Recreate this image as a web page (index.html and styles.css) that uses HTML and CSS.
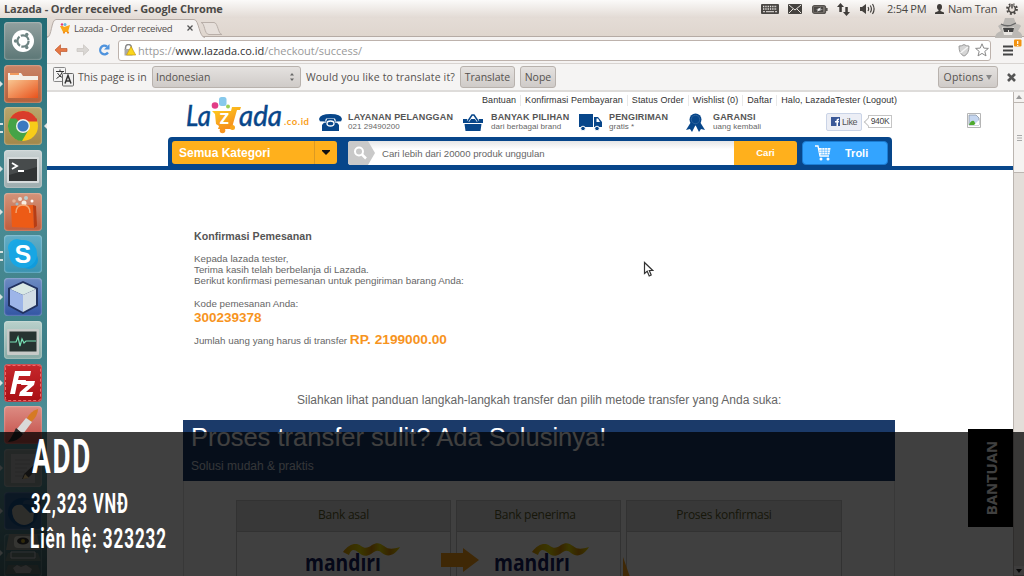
FILE: index.html
```html
<!DOCTYPE html>
<html lang="id">
<head>
<meta charset="utf-8">
<title>Lazada - Order received</title>
<link rel="stylesheet" href="styles.css">
</head>
<body>
<div class="screen">
<header class="panel">
  <span class="panel-title">Lazada - Order received - Google Chrome</span>
  <svg class="ind-kbd" width="18" height="10" viewBox="0 0 18 10"><rect width="18" height="10" rx="1" fill="#4a4744"/><path d="M2 2.5h14M2 5h14" stroke="#e8e4e0" stroke-width="1.3" stroke-dasharray="1.3 1"/><path d="M2 7.7h2M5 7.7h8M14 7.7h2" stroke="#e8e4e0"/></svg>
  <svg class="ind-mail" width="14" height="10" viewBox="0 0 14 10"><rect width="14" height="10" rx="1" fill="#45423f"/><path d="M1 1l6 5 6-5M1 9l4-4M13 9L9 5" stroke="#e9e4df" fill="none"/></svg>
  <svg class="ind-bat" width="16" height="9" viewBox="0 0 16 9"><rect x=".6" y=".6" width="13" height="7.8" rx="2" fill="#77726d" stroke="#55514d" stroke-width="1.2"/><path d="M14 3h1.6v3H14z" fill="#55514d"/><rect x="2" y="2" width="9" height="5" fill="#4a4744"/><path d="M4 4.5l5-2-1 2 3 0-6 2 1-2z" fill="#eee"/></svg>
  <svg class="ind-net" width="13" height="13" viewBox="0 0 13 13"><path d="M3.5 0L0 4h2.3v5h2.5V4H7zM9.5 13L6 9h2.3V4h2.5v5H13z" fill="#3f3c39"/></svg>
  <svg class="ind-vol" width="16" height="12" viewBox="0 0 16 12"><path d="M0 4h2l4-3v10L2 8H0z" fill="#45423f"/><path d="M8 4q1.3 2 0 4M10.3 2.5q2.2 3.5 0 7M12.5 1q3.2 5 0 10" stroke="#45423f" stroke-width="1.2" fill="none"/></svg>
  <span class="clock">2:54 PM</span>
  <svg class="ind-user" width="9" height="11" viewBox="0 0 9 11"><ellipse cx="4.5" cy="3" rx="2.5" ry="3" fill="#3f3c39"/><path d="M3.5 5h2v2L9 8.4V10H0V8.4L3.500 7z" fill="#3f3c39"/></svg>
  <span class="user">Nam Tran</span>
  <svg class="ind-gear" width="12" height="12" viewBox="0 0 12 12"><circle cx="6" cy="6" r="4.900" fill="none" stroke="#4a4744" stroke-width="2" stroke-dasharray="1.9 1.950"/><circle cx="6" cy="6" r="3.400" fill="#e7e0da" stroke="#4a4744" stroke-width="1.500"/><path d="M4.600 0h2.800v5.500H4.600z" fill="#eee8e3"/><path d="M6 1v4.500" stroke="#4a4744" stroke-width="1.500"/></svg>
</header>
<div class="desktop">
<nav class="launcher">
  <div class="tile dash"><svg viewBox="0 0 38 38"><circle cx="19" cy="19" r="11" fill="#fff"/><circle cx="19" cy="19" r="5.600" fill="none" stroke="#6e8483" stroke-width="2.200" stroke-dasharray="10.300 1.400"/><circle cx="11.500" cy="19" r="1.700" fill="#6e8483"/><circle cx="22.800" cy="12.500" r="1.700" fill="#6e8483"/><circle cx="22.800" cy="25.500" r="1.700" fill="#6e8483"/></svg></div>
  <div class="tile files run"><svg viewBox="0 0 38 38"><path d="M4 8h13l2 3h15v8H4z" fill="#f4eee6"/><path d="M6 9h9" stroke="#f19a5c" stroke-width="2"/><path d="M4 15h30v18H4z" fill="url(#go)"/><defs><linearGradient id="go" x2="1" y2="1"><stop stop-color="#f8c691"/><stop offset="1" stop-color="#e9521c"/></linearGradient></defs></svg></div>
  <div class="tile chrome run two active"><svg viewBox="0 0 38 38"><circle cx="19" cy="19" r="15" fill="#f7cc19"/><path d="M19 19L6 11.500A15 15 0 0 1 33 13.500H19z" fill="#d93c2c"/><path d="M19 19l-7-7.500-6 0A15 15 0 0 0 18 34l7-12z" fill="#45a347"/><path d="M19 13h14" stroke="#d93c2c" stroke-width="3"/><circle cx="19" cy="19" r="7" fill="#f1f3ed"/><circle cx="19" cy="19" r="5.600" fill="#3b79c0"/></svg></div>
  <div class="tile term run"><svg viewBox="0 0 38 38"><rect x="3" y="7" width="32" height="26" rx="1" fill="#d5dadb"/><rect x="5" y="9" width="28" height="22" fill="#303334"/><path d="M5 9h28v8L5 25z" fill="#474b4c"/><path d="M8 13l5 3-5 3M14 21h6" stroke="#fff" stroke-width="1.800" fill="none"/></svg></div>
  <div class="tile soft run"><svg viewBox="0 0 38 38"><path d="M7 13l22-1 1 23-22-1z" fill="#ed5b16"/><path d="M29 12l3 1 1 20-3 2z" fill="#b63d15"/><circle cx="10" cy="8" r="1.800" fill="#e6b094"/><circle cx="16" cy="6" r="2" fill="#ebe2d8"/><circle cx="22" cy="5" r="2" fill="#b8ced0"/><circle cx="28" cy="8" r="1.500" fill="#fff"/><circle cx="20" cy="10" r="2.500" fill="#f7eee2"/><circle cx="13" cy="11" r="1.500" fill="#9fb9c4"/><path d="M12 20q0-8 7-8t7 8" fill="none" stroke="#f4a570" stroke-width="1.500"/></svg></div>
  <div class="tile skype run two"><svg viewBox="0 0 38 38"><circle cx="13" cy="13" r="9" fill="#19a9e5"/><circle cx="25" cy="25" r="9" fill="#109bdc"/><circle cx="19" cy="19" r="14" fill="#18a6e4"/><text x="10.500" y="28" class="s-letter">S</text></svg></div>
  <div class="tile cube run"><svg viewBox="0 0 38 38"><path d="M19 3l15 7v18L19 36 4 28V10z" fill="#20315e"/><path d="M19 5l13 6-13 6L6 11z" fill="#d8e8e5"/><path d="M6 11l13 6v17L6 27z" fill="#9db5e8"/><path d="M32 11l-13 6v17l13-7z" fill="#d1dce5"/></svg></div>
  <div class="tile monitor"><svg viewBox="0 0 38 38"><rect x="3" y="8" width="32" height="26" rx="1" fill="#c7cac8"/><rect x="5.500" y="10.500" width="27" height="20" fill="#263331"/><path d="M6 21h6l2-5 2 9 2-7 2 4 2-2h10" stroke="#78e0b5" stroke-width="1.200" fill="none"/></svg></div>
  <div class="tile fz run"><svg viewBox="0 0 38 38"><rect x="1.500" y="1.500" width="35" height="35" rx="2" fill="none" stroke="#e96b6b" stroke-dasharray="3 2"/><path d="M11 7h16l-1 5H15l-1 4h8l-1 4h-8l-2 10H6z M18 17h13l-1 4-8 7h7l-1 4H15l1-4 8-7h-7z" fill="#fff"/></svg></div>
  <div class="tile paint"><svg viewBox="0 0 38 38"><path d="M34 3q-7 2-11 9l4 4q7-6 7-13z" fill="#d67a24"/><path d="M22 12l6 4-9 12-6-5z" fill="#d9d9d9"/><path d="M12 22l7 6q-4 7-15 8 4-5 8-14z" fill="#292929"/></svg></div>
  <div class="tile edit run"><svg viewBox="0 0 38 38"><rect x="7" y="5" width="24" height="29" fill="#b5b5b3"/><path d="M11 11h15M11 15h15M11 19h12M11 23h10M11 27h8" stroke="#999"/><path d="M33 13l3 4-12 12-6 1 2-5z" fill="#444"/><path d="M21 25l4 4-6 1z" fill="#e8c98a"/></svg></div>
  <div class="tile bird run"><svg viewBox="0 0 38 38"><path d="M4 23C3 8 17 2 29 8q-11-1-10 4 13-1 15 9-1 12-13 14Q8 35 4 23z" fill="#174f88"/><path d="M8 18q2-6 10-5l8 8 4-1-1 9q-8 7-15 2-6-4-6-13z" fill="#b5b2a8"/></svg></div>
  <div class="tile stack run"><svg viewBox="0 0 38 43"><path d="M5 0h28l3 16H2z" fill="#8f958b"/><rect x="10" y="2" width="18" height="12" rx="4" fill="#d4d1c6"/><ellipse cx="19" cy="7" rx="6" ry="3.500" fill="#333"/><circle cx="19" cy="7" r="2" fill="#bfa32e"/><path d="M4 19h30l3 8H1z" fill="#6c7f79"/><path d="M7 18h24v6H7z" fill="none" stroke="#ccc"/><path d="M4 31h30l3 9H1z" fill="#5f706b"/><path d="M9 34l4-3 4 2 5-2 6 4-2 4H12z" fill="#a5a5a5"/></svg></div>
</nav>
<main class="window">
  <div class="tabs">
    <svg class="tab-shape" width="185" height="20" viewBox="0 0 185 20"><path d="M0 19.500C5 19 4 1.500 9 1.500H147C152 1.500 152 19.500 158 19.500" fill="#f5f3f2" stroke="#b5aba5"/><path d="M154 4.500h13c4 0 4 12 8 12h-13c-5 0-4-12-8-12z" fill="#e6dfda" stroke="#b9afa9"/></svg>
    <svg class="favicon" width="11" height="11" viewBox="0 0 11 11"><path d="M0 3h3l1 1 6-2-2 7H3z" fill="#f9a61a"/><circle cx="2" cy="1.500" r="1.200" fill="#e43a79"/><circle cx="5" cy="1.500" r="1.500" fill="#6bb8dd"/><circle cx="4" cy="9.600" r="1.100" fill="#f08b1d"/><circle cx="8" cy="9.600" r="1.100" fill="#f08b1d"/></svg>
    <span class="tab-title">Lazada - Order received</span>
    <svg class="tab-close" width="6" height="6" viewBox="0 0 6 6"><path d="M.5.5l5 5M5.500.5l-5 5" stroke="#555" stroke-width="1.300"/></svg>
    <svg class="spy" width="28" height="20" viewBox="0 0 28 20"><path d="M1 20q0-5 6-7l-3-5q2-2 5-2l2-6h9l2 6q4 0 5 2l-3 5q5 2 4 7z" fill="#bbb8b4"/><path d="M8 9q6 3 12 0l-2 8h-8z" fill="#e8e5e1"/><path d="M7 6q7 4 15-1" stroke="#666" fill="none" stroke-width="1.300"/><path d="M9 10h11l-1 4h-4v-2h-1v2h-4z" fill="#444"/></svg>
  </div>
  <div class="toolbar">
    <svg class="t-back" width="14" height="12" viewBox="0 0 14 12"><path d="M6.500.8L1 6l5.500 5.200V7.500H13V4.500H6.500z" fill="#e57745" stroke="#bf5c30" stroke-width=".7"/></svg>
    <svg class="t-fwd" width="14" height="12" viewBox="0 0 14 12"><path d="M7.500.8L13 6l-5.500 5.200V7.500H1V4.500h6.500z" fill="#d9d6d3" stroke="#c7c3bf" stroke-width=".7"/></svg>
    <svg class="t-reload" width="12" height="12" viewBox="0 0 12 12"><path d="M9 2.500A4.300 4.300 0 1 0 10 8.500" fill="none" stroke="#4f93dd" stroke-width="2.300"/><path d="M11.500 0v5.500H6z" fill="#4f93dd"/></svg>
    <div class="omnibox">
      <svg width="12" height="12" viewBox="0 0 12 12"><path d="M1.500 6V4q0-3.500 3-3.500T7.500 4v2" fill="none" stroke="#888" stroke-width="1.500"/><rect x=".5" y="5" width="8" height="6.500" fill="#aaa"/><path d="M7 2.500l4.700 8.500H2.500z" fill="#fbd51b" stroke="#c49b12" stroke-width=".7"/></svg>
      <span class="url">https://<b>www.lazada.co.id</b>/checkout/success/</span>
      <svg width="12" height="13" viewBox="0 0 12 13"><path d="M6 .6q2.500 1.500 5 1.500 0 8-5 10-5-2-5-10 2.500 0 5-1.500z" fill="#d5d5d5" stroke="#999"/><path d="M2.500 9L9.800 3" stroke="#f5f5f5" stroke-width="1.500"/></svg>
      <svg class="star" width="14" height="14" viewBox="0 0 14 14"><path d="M7 .8l1.800 4.300 4.600.3-3.600 3 1.200 4.500-4-2.500-4 2.500 1.200-4.500-3.600-3 4.600-.3z" fill="#fff" stroke="#888"/></svg>
    </div>
    <svg class="menu" width="22" height="20" viewBox="0 0 22 20"><path d="M3 9.500h10M3 13.500h10M3 17.500h10" stroke="#444" stroke-width="2.200"/><rect x="14" y="2.500" width="7.500" height="7" rx="1" fill="#f29313"/><path d="M17.700 4v3M17.700 8v1" stroke="#fff" stroke-width="1.200"/></svg>
  </div>
  <div class="infobar">
    <svg class="lang" width="21" height="20" viewBox="0 0 21 20"><rect x=".5" y=".5" width="12" height="14" rx="1" fill="#f4f4f4" stroke="#888"/><path d="M3 4.500h8M7 2.500v2M9.500 4.500q-1.500 5-6 7M4.500 6q2 4 6 5" stroke="#333" fill="none"/><rect x="9.500" y="6.500" width="11" height="12.500" rx="1" fill="#efefef" stroke="#666"/><path d="M12 16.500l3-8 3 8M13 14h4" stroke="#333" stroke-width="1.500" fill="none"/></svg>
    <span class="i-page">This page is in</span>
    <span class="btn select"><span>Indonesian</span><svg width="6" height="10" viewBox="0 0 6 10"><path d="M1 3.500L3 1l2 2.500zM1 6.500L3 9l2-2.500z" fill="#666"/></svg></span>
    <span class="i-ask">Would you like to translate it?</span>
    <span class="btn b-tr">Translate</span>
    <span class="btn b-no">Nope</span>
    <span class="btn b-opt">Options<svg width="6" height="5" viewBox="0 0 6 5"><path d="M0 0h6L3 5z" fill="#888"/></svg></span>
    <svg class="i-close" width="9" height="9" viewBox="0 0 9 9"><path d="M1 1l7 7M8 1L1 8" stroke="#555" stroke-width="2.600"/></svg>
  </div>
  <div class="viewport">
    <div class="page">
      <div class="toplinks"><span>Bantuan</span><span>Konfirmasi Pembayaran</span><span>Status Order</span><span>Wishlist (0)</span><span>Daftar</span><span>Halo, LazadaTester (Logout)</span></div>
      <div class="services">
        <svg class="logo" width="124" height="38" viewBox="0 0 124 38">
          <defs><linearGradient id="cart" x2=".6" y2="1"><stop stop-color="#ffd21c"/><stop offset="1" stop-color="#f58b1f"/></linearGradient></defs>
          <rect x="33" y="2" width="7.500" height="9" rx="2.500" fill="#87c9ec"/><circle cx="29" cy="10.500" r="3.300" fill="#e13d86"/><circle cx="42" cy="11.500" r="2" fill="#9bcf55"/>
          <path d="M26 16l19 0 1-4h9l-1 3h-3l-4 14-1 5H32l1-3-3-2-1-10z" fill="url(#cart)"/><circle cx="36.500" cy="35.500" r="2.800" fill="#f7941e"/><circle cx="46.500" cy="32.500" r="2.500" fill="#f9a61a"/>
          <text x="0" y="31" class="lz" textLength="25" lengthAdjust="spacingAndGlyphs">La</text><text x="33.500" y="29" class="lz-z">z</text>
          <text x="53" y="31" class="lz" textLength="43" lengthAdjust="spacingAndGlyphs">ada</text>
          <text x="98" y="30" class="lz-id" textLength="25">.co.id</text>
        </svg>
        <svg class="s1" width="23" height="17" viewBox="0 0 23 17"><path d="M0 5Q1 0 11.500 0T23 5l-1 2.500h-5l-1-3H7l-1 3H1z" fill="#07468a"/><path d="M8 5h7l5 6v6H3v-6z" fill="#07468a"/><path d="M1 8L6.500 8.500 7.500 5" fill="none" stroke="#fff" stroke-width=".8"/><path d="M22 8l-5.500.5L15.500 5" fill="none" stroke="#fff" stroke-width=".8"/><ellipse cx="11.500" cy="9.500" rx="3.500" ry="2.500" fill="none" stroke="#fff" stroke-width="1.300"/></svg>
        <p class="svc w1"><b>LAYANAN PELANGGAN</b>021 29490200</p>
        <svg class="s2" width="20" height="17" viewBox="0 0 20 17"><path d="M0 5h20v4H0zM1.500 10h17L17.500 17h-15z" fill="#07468a"/><path d="M5 7l4-6h2l4 6" fill="none" stroke="#fff" stroke-width="3"/><path d="M5 7l4-6h2l4 6" fill="none" stroke="#07468a" stroke-width="1.500"/></svg>
        <p class="svc w2"><b>BANYAK PILIHAN</b>dari berbagai brand</p>
        <svg class="s3" width="23" height="18" viewBox="0 0 23 18"><path d="M0 1h14v13H0zM15 4h4l4 5v5h-8z" fill="#07468a"/><path d="M17.500 5.500H19l2 3.500h-3.500z" fill="#fff"/><circle cx="4" cy="15.500" r="2.300" fill="#07468a" stroke="#fff"/><circle cx="18" cy="15.500" r="2.300" fill="#07468a" stroke="#fff"/></svg>
        <p class="svc w3"><b>PENGIRIMAN</b>gratis *</p>
        <svg class="s4" width="19" height="19" viewBox="0 0 19 19"><path d="M5 9l-5 8 4-1 2 3 3.500-7L13 19l2-3 4 1-5-8z" fill="#07468a"/><circle cx="9.500" cy="6.500" r="6" fill="#07468a"/><circle cx="9.500" cy="6.500" r="4.200" fill="none" stroke="#3f71a6" stroke-width=".6"/></svg>
        <p class="svc w4"><b>GARANSI</b>uang kembali</p>
        <span class="like"><svg width="9" height="9" viewBox="0 0 9 9"><rect width="9" height="9" fill="#3b5998"/><path d="M5.500 9V5.500H4V4h1.500V3Q5.500 1.300 8 1.500V3Q7 2.800 7 4h1L7.800 5.500H7V9z" fill="#fff"/></svg>Like</span>
        <span class="count">940K</span>
        <svg class="broken" width="14" height="15" viewBox="0 0 14 15"><path d="M.5.5h13v14H.5z" fill="#fff" stroke="#b5b5b5"/><path d="M2 2h7l3 3v7H2z" fill="#c5d6f0" stroke="#8b97a5" stroke-width=".8"/><path d="M2 12q2-5 5-4l2 4z" fill="#4eaa2e"/><path d="M12 7l-5 5h5z" fill="#fff"/></svg>
      </div>
      <div class="navwrap"><div class="navbar">
        <div class="cat"><span>Semua Kategori</span><i><svg width="8" height="5" viewBox="0 0 8 5"><path d="M0 0h8v1L4 5 0 1z" fill="#111"/></svg></i></div>
        <div class="search"><svg width="28" height="24" viewBox="0 0 28 24"><path d="M0 0h20l7 12-7 12H0z" fill="#c9c9c9"/><circle cx="11" cy="10.500" r="4" fill="none" stroke="#fff" stroke-width="2"/><path d="M14 13.500l4 4" stroke="#fff" stroke-width="2.500"/></svg><span>Cari lebih dari 20000 produk unggulan</span></div>
        <div class="cari">Cari</div>
        <div class="troli"><svg width="16" height="16" viewBox="0 0 16 16"><path d="M0 1h3l2 10h9" fill="none" stroke="#fff" stroke-width="1.300"/><path d="M3.500 3H15.500l-1 6.500H5z" fill="#fff"/><path d="M4 5.200h11M4 7.400h11M7 3v6.500M9.700 3v6.500M12.400 3v6.500" stroke="#33a4ff" stroke-width=".5"/><circle cx="6" cy="14" r="1.500" fill="#fff"/><circle cx="13" cy="14" r="1.500" fill="#fff"/></svg><span>Troli</span></div>
      </div></div>
      <section class="order">
        <h1>Konfirmasi Pemesanan</h1>
        <p class="greet">Kepada lazada tester,<br>Terima kasih telah berbelanja di Lazada.<br>Berikut konfirmasi pemesanan untuk pengiriman barang Anda:</p>
        <p class="kode">Kode pemesanan Anda:</p>
        <p class="code">300239378</p>
        <p class="sum">Jumlah uang yang harus di transfer <b>RP. 2199000.00</b></p>
      </section>
      <p class="guide">Silahkan lihat panduan langkah-langkah transfer dan pilih metode transfer yang Anda suka:</p>
      <section class="transfer">
        <div class="banner"><h2>Proses transfer sulit? Ada Solusinya!</h2><p>Solusi mudah &amp; praktis</p></div>
        <div class="banks">
          <div class="bank b1"><h3>Bank asal</h3><svg class="mandiri" width="100" height="34" viewBox="0 0 100 34"><use href="#mandiri"/></svg></div>
          <div class="bank b2"><h3>Bank penerima</h3><svg class="mandiri" width="100" height="34" viewBox="0 0 100 34"><g id="mandiri"><text x="0" y="28" class="md" textLength="76" lengthAdjust="spacingAndGlyphs">mandırı</text><path d="M38 9C44 1 51-1 56 3c4 3 7 2 11-1 5-3 8-2 12 1 5 4 9 3 16 1-5 8-12 11-18 6-4-4-7-2-11 1-5 3-9 2-13-2-4-3-7-3-9 3z" fill="url(#gold)"/></g><defs><linearGradient id="gold"><stop stop-color="#df9700"/><stop offset=".3" stop-color="#eade00"/><stop offset=".5" stop-color="#d98c00"/><stop offset=".65" stop-color="#eade00"/><stop offset=".82" stop-color="#d98c00"/><stop offset="1" stop-color="#eade00"/></linearGradient></defs></svg></div>
          <div class="bank b3"><h3>Proses konfirmasi</h3></div>
          <svg class="arrow" width="38" height="24" viewBox="0 0 38 24"><path d="M0 5h22V0l16 12-16 12v-5H0z" fill="#f9a01b"/></svg>
          <svg class="spike" width="8" height="20" viewBox="0 0 8 20"><path d="M0 0l7 20H0z" fill="#f9a01b"/></svg>
        </div>
      </section>
      <div class="help"><span>BANTUAN</span></div>
    </div>
    <div class="scroll"><i class="up"><svg width="6" height="4" viewBox="0 0 6 4"><path d="M0 4l3-4 3 4z" fill="#999"/></svg></i><i class="thumb"><svg width="5" height="6" viewBox="0 0 5 6"><path d="M0 .5h5M0 3h5M0 5.500h5" stroke="#aaa"/></svg></i><i class="down"><svg width="6" height="4" viewBox="0 0 6 4"><path d="M0 0h6L3 4z" fill="#222"/></svg></i></div>
  </div>
</main>
</div>
<svg class="cursor" width="11" height="17" viewBox="0 0 11 17"><path d="M1.500 1.500v11l2.700-2.200L6.200 15l2-1L6.300 9.500h3.500z" fill="#fff" stroke="#333" stroke-width="1.200"/></svg>
<aside class="caption">
  <svg width="240" height="144" viewBox="0 0 240 144">
    <text x="32" y="40.500" class="c-big" textLength="60" lengthAdjust="spacingAndGlyphs">ADD</text>
    <text x="31" y="81" class="c-small" textLength="98" lengthAdjust="spacingAndGlyphs">32,323 VNĐ</text>
    <text x="30" y="116" class="c-small" textLength="137" lengthAdjust="spacingAndGlyphs">Liên hệ: 323232</text>
  </svg>
</aside>
</div>
</body>
</html>
```
FILE: styles.css
```css
* { box-sizing: border-box; }
body, p, h1, h2, h3 { margin: 0; }
svg { flex: none; display: block; }
i { font-style: normal; }
.screen { position: relative; width: 1024px; height: 576px; overflow: hidden; display: flex; flex-direction: column; font-family: "Liberation Sans", Arial, sans-serif; background: #fff; }
.panel { height: 18px; display: flex; align-items: center; padding-left: 4px; background: linear-gradient(#fbfaf9, #e2dad4); font: 11px/18px "Open Sans", "Noto Sans", sans-serif; color: #4a4744; white-space: nowrap; }
.panel-title { font-weight: 700; font-size: 11px; letter-spacing: -.1px; width: 757px; color: #4c4a47; }
.ind-mail { margin-left: 9px; }
.ind-bat { margin-left: 10px; }
.ind-net { margin-left: 9px; }
.ind-vol { margin-left: 10px; }
.clock { margin-left: 11px; width: 48px; letter-spacing: -.25px; }
.user { margin-left: 4px; width: 58px; letter-spacing: -.2px; }
.desktop { flex: 1; min-height: 0; display: flex; }
.launcher { width: 47px; flex: none; display: flex; flex-direction: column; gap: 4.700px; padding: 4px 0 0 4px; background: linear-gradient(165deg, #1f6973, #4a8b93 35%, #3d7f88 60%, #5b98a0 80%, #43666a); }
.tile { width: 38px; height: 38px; border-radius: 4px; flex: none; position: relative; box-shadow: inset 0 0 2px rgba(255,255,255,.7); }
.tile svg { width: 38px; height: 100%; }
.dash { background: linear-gradient(#91a09f, #5c7776); }
.files { background: linear-gradient(#c98466, #b5603a); }
.chrome { background: linear-gradient(#b9a66c, #a2874a); }
.term { background: linear-gradient(#cad2d3, #9cacae); }
.soft { background: linear-gradient(#d3947a, #c05c3c); }
.skype { background: linear-gradient(#63adc5, #3a93b1); }
.cube { background: linear-gradient(#6c8bc2, #3356a4); }
.monitor { background: linear-gradient(#b9d0cb, #87aaa5); }
.fz { background: linear-gradient(#c6282c, #a90e13); }
.paint { background: linear-gradient(#dd8c83, #c14b45); }
.edit { background: #8e9b99; }
.bird { background: #315f91; }
.stack { height: 43px; }
.run::before { content: ""; position: absolute; left: -4px; top: 16px; border: 3px solid transparent; border-left-color: #d7e0e0; border-right-width: 0; }
.two::before { border: 0; border-top: 2px solid #d7e0e0; border-bottom: 2px solid #d7e0e0; width: 3px; height: 6px; }
.active::after { content: ""; position: absolute; right: -5px; top: 16px; border: 3px solid transparent; border-right-color: #e5e7e5; border-left-width: 0; }
.s-letter { font: 700 25px "Liberation Sans", sans-serif; fill: #fff; }
.window { flex: 1; min-width: 0; display: flex; flex-direction: column; font-family: "Open Sans", "Noto Sans", sans-serif; color: #55524f; }
.tabs { height: 19px; flex: none; display: flex; align-items: center; background: linear-gradient(#e4dcd6, #dfd6ce); border-bottom: 1px solid #b5aba5; position: relative; padding: 2px 0 0 13px; }
.tab-shape { position: absolute; left: 0; top: 0; }
.favicon { position: relative; }
.tab-title { position: relative; margin-left: 3px; width: 113px; font-size: 9.600px; white-space: nowrap; letter-spacing: -.35px; }
.tab-close { position: relative; }
.spy { margin-left: auto; margin-right: 2px; }
.toolbar { height: 27px; flex: none; display: flex; align-items: center; background: #f5f3f2; padding-left: 7px; border-bottom: 1px solid #d8d4d1; }
.t-fwd { margin-left: 8px; }
.t-reload { margin-left: 8px; }
.omnibox { margin-left: 8px; width: 873px; height: 21px; border: 1px solid #bdb2ac; border-radius: 3px; background: #fff; display: flex; align-items: center; padding: 0 1px 0 5px; }
.url { flex: 1; margin-left: 2px; font-size: 11px; color: #999; white-space: nowrap; }
.url b { font-weight: 400; color: #333; }
.star { margin-left: 5px; }
.menu { margin-left: 9px; margin-top: -7px; }
.infobar { height: 28px; flex: none; display: flex; align-items: center; background: #f5f4f3; border-bottom: 2px solid #dedcda; padding-left: 6px; font-size: 10.500px; white-space: nowrap; }
.i-page { margin-left: 4px; width: 74px; }
.btn { height: 22px; border: 1px solid #b8b2ad; border-radius: 3px; background: linear-gradient(#e4e1df, #cfcbc8); display: flex; align-items: center; justify-content: center; }
.select { width: 149px; justify-content: space-between; padding: 0 5px 0 3px; }
.i-ask { margin-left: 5px; width: 154px; letter-spacing: .15px; }
.b-tr { width: 55px; }
.b-no { width: 36px; margin-left: 5px; }
.b-opt { width: 60px; margin-left: auto; gap: 3px; letter-spacing: .15px; }
.i-close { margin: 0 8px 0 9px; }
.viewport { flex: 1; min-height: 0; display: flex; }
.page { width: 966px; flex: none; position: relative; background: #fff; font-family: "Liberation Sans", Arial, sans-serif; color: #666; overflow: hidden; }
.toplinks { height: 14px; padding: 3px 0 0 435px; display: flex; font-size: 9px; line-height: 11px; letter-spacing: .08px; color: #333; white-space: nowrap; }
.toplinks span + span { margin-left: 4px; padding-left: 4px; border-left: 1px solid #e9e9e9; }
.services { height: 31px; display: flex; align-items: center; padding-left: 139px; }
.logo { margin-top: -16px; overflow: visible; }
.lz { font: italic 400 29px Lato, sans-serif; fill: #07468a; stroke: #07468a; stroke-width: .5px; }
.lz-z { font: 700 21px Lato, sans-serif; fill: #fff; }
.lz-id { font: 700 9.500px Lato, sans-serif; fill: #f9a01b; }
.s1 { margin: 1px 6px 0 9px; }
.s2 { margin: 1px 8px 0 9px; }
.s3 { margin: 1px 7px 0 9px; }
.s4 { margin: 1px 8px 0 13px; }
.svc { font-size: 8px; line-height: 9px; letter-spacing: .04px; white-space: nowrap; }
.svc b { display: block; font-size: 9px; line-height: 9px; letter-spacing: .16px; color: #555; }
.w1 { width: 106px; } .w2 { width: 79px; } .w3 { width: 64px; } .w4 { width: 113px; }
.like { width: 36px; height: 18px; border: 1px solid #cad4e7; border-radius: 2px; background: #eceef5; display: flex; align-items: center; padding-left: 4px; gap: 2px; font-size: 9px; letter-spacing: -.3px; color: #555; }
.count { margin-left: 6px; width: 24px; height: 13px; border: 1px solid #c5c5c5; font-size: 8.500px; line-height: 11px; text-align: center; letter-spacing: -.3px; color: #444; position: relative; }
.count::before { content: ""; position: absolute; left: -4px; top: 3px; width: 5px; height: 5px; border-left: 1px solid #c5c5c5; border-bottom: 1px solid #c5c5c5; background: #fff; transform: rotate(45deg); }
.broken { margin-left: 75px; margin-top: -3px; }
.navwrap { height: 33px; border-bottom: 4px solid #07468a; padding-left: 121px; }
.navbar { width: 724px; height: 30px; background: #07468a; border-radius: 4px 4px 0 0; display: flex; padding: 4px 0 0 4px; color: #fff; font-weight: 700; }
.cat { width: 165px; height: 23px; border-radius: 3px; background: #ffb01c; display: flex; align-items: center; justify-content: space-between; padding-left: 7px; font-size: 12px; }
.cat i { width: 23px; height: 23px; border-left: 1px solid #dc9a22; display: flex; align-items: center; justify-content: center; }
.search { margin-left: 11px; width: 386px; height: 24px; background: linear-gradient(#e6e6e6, #fff 35%); border-radius: 3px 0 0 3px; overflow: hidden; display: flex; align-items: center; font-size: 9.600px; font-weight: 400; color: #666; }
.search span { margin-left: 6px; }
.cari { width: 63px; height: 24px; background: #ffb01c; border-radius: 0 3px 3px 0; font-size: 9.500px; line-height: 24px; text-align: center; }
.troli { margin-left: 5px; width: 86px; height: 24px; border: 1px solid #1c7dd3; border-radius: 4px; background: #33a4ff; display: flex; align-items: center; padding-left: 12px; gap: 14px; font-size: 11px; }
.order { padding: 60px 0 0 147px; font-size: 9.770px; line-height: 11.200px; height: 223px; }
.order h1 { font-size: 10.650px; line-height: 12px; color: #555; }
.greet { margin-top: 11px; }
.kode { margin-top: 11px; }
.code { font-weight: 700; font-size: 13.500px; line-height: 18px; color: #f7941e; }
.sum { margin-top: 5px; line-height: 18px; }
.sum b { font-size: 13.700px; line-height: 16px; color: #f7941e; }
.guide { padding-left: 250px; height: 27px; font-size: 12px; line-height: 14px; white-space: nowrap; }
.transfer { margin-left: 136px; width: 712px; height: 170px; border: 1px solid #ddd; border-top: 0; }
.banner { height: 61px; margin: 0 -1px; background: #1b3a69; padding: 2px 0 0 8px; color: #fff; }
.banner h2 { font-weight: 400; font-size: 25.500px; line-height: 31px; white-space: nowrap; }
.banner p { font-size: 12px; line-height: 14px; margin-top: 6px; color: #cfd5df; }
.banks { display: flex; padding: 19px 0 0 52px; gap: 5px; position: relative; }
.bank { height: 90px; border: 1px solid #c8c8c8; flex: none; }
.bank h3 { height: 31px; border-bottom: 1px solid #c8c8c8; background: #dfdfdf; font: 400 12px/28px "Open Sans", sans-serif; letter-spacing: -.28px; color: #5c5c2b; text-align: center; }
.b1 { width: 215px; } .b2 { width: 165px; } .b3 { width: 216px; }
.b2 h3 { padding-right: 7px; }
.b3 h3 { padding-right: 20px; }
.mandiri { margin: 11px 0 0 68px; }
.b2 .mandiri { margin-left: 37px; }
.md { font: 700 23px "Open Sans", sans-serif; fill: #17205f; }
.arrow { position: absolute; left: 257px; top: 67px; }
.spike { position: absolute; left: 439px; top: 76px; }
.help { position: absolute; right: 0; top: 337px; width: 45px; height: 98px; background: #000; display: flex; align-items: center; justify-content: center; }
.help span { writing-mode: vertical-rl; transform: rotate(180deg); font: 700 14.800px/18px "Open Sans", sans-serif; color: #fff; }
.scroll { width: 11px; background: #e3ded9; border-left: 1px solid #bbb5b0; display: flex; flex-direction: column; }
.scroll i { display: flex; align-items: center; justify-content: center; border-bottom: 1px solid #bcb6b1; background: #f5f3f1; }
.scroll .up { height: 11px; } .scroll .thumb { height: 70px; } .scroll .down { height: 10px; margin-top: auto; }
.cursor { position: absolute; left: 643px; top: 261px; }
.caption { position: absolute; left: 0; top: 432px; width: 1024px; height: 144px; background: rgba(0,0,0,.75); }
.c-big, .c-small { font-family: Roboto, sans-serif; font-weight: 700; fill: #fff; }
.c-big { font-size: 48px; letter-spacing: 3px; }
.c-small { font-size: 27px; letter-spacing: 1.500px; }
```
